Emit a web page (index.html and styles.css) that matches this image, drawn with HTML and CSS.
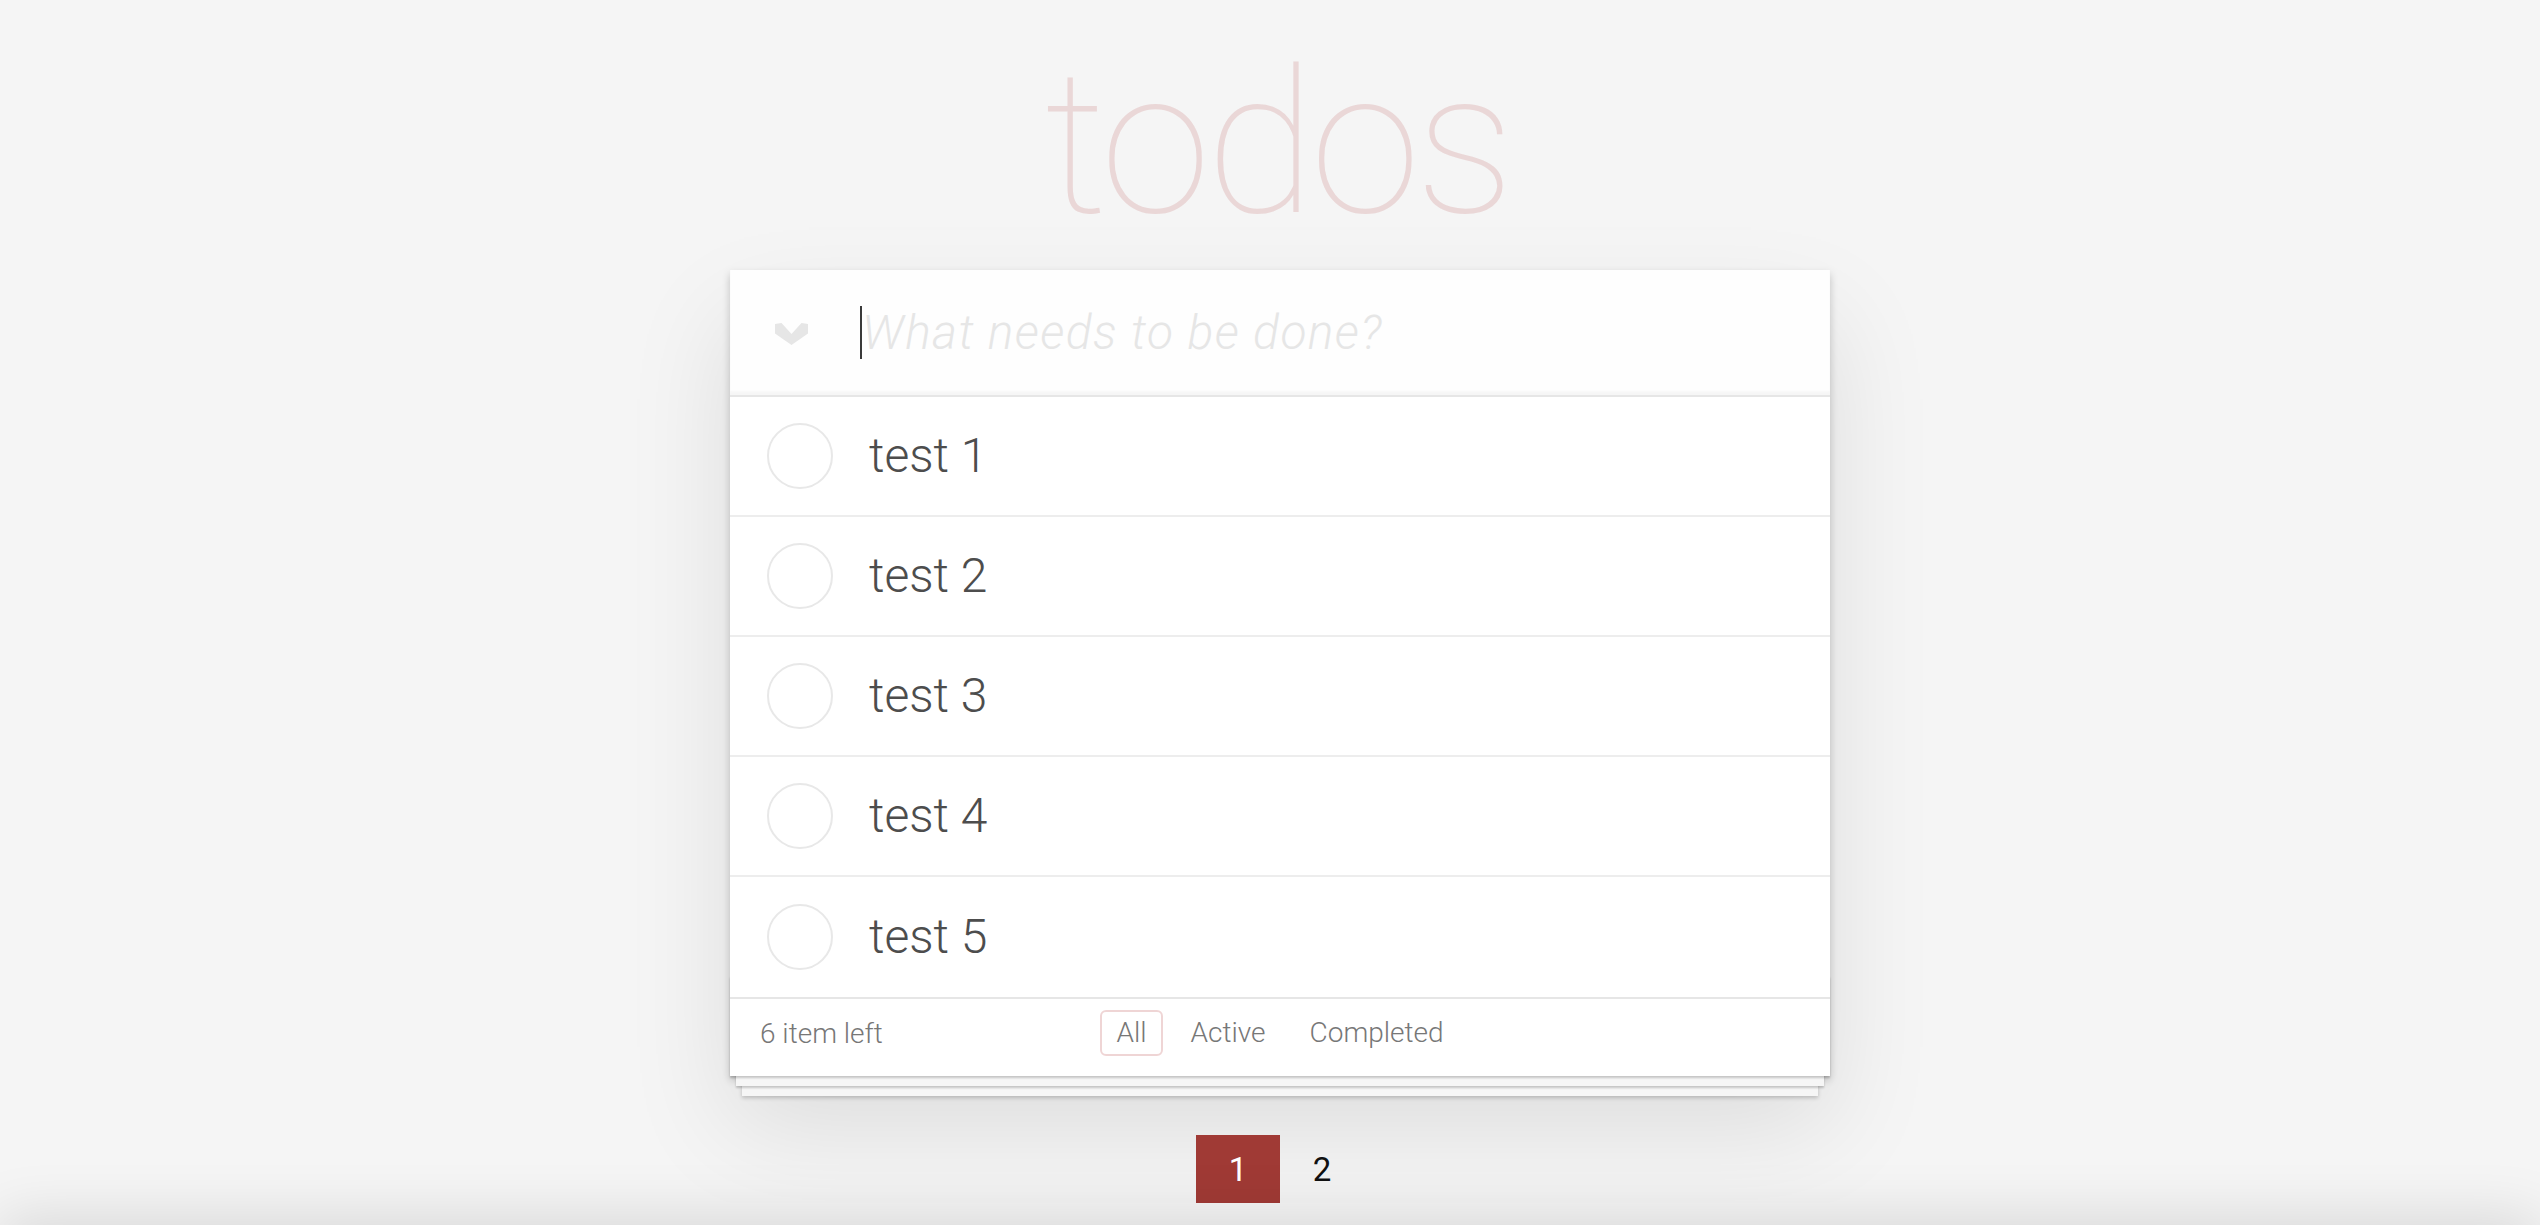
FILE: index.html
```html
<!DOCTYPE html>
<html lang="en">
<head>
<meta charset="utf-8">
<title>todos</title>
<link rel="stylesheet" href="styles.css">
</head>
<body>
<div class="page">
  <section class="todoapp">
    <h1 class="title">todos</h1>
    <div class="card">
      <header class="header">
        <svg class="toggle-all" width="33" height="22" viewBox="0 0 33 22" aria-hidden="true">
          <polygon points="0,1 6.5,0 16.5,11 26.5,0 33,1 33,10.5 16.5,22 0,10.5" fill="#e6e6e6"/>
        </svg>
        <div class="new-todo"><span class="caret"></span><span class="placeholder">What needs to be done?</span></div>
      </header>
      <ul class="todo-list">
        <li class="todo"><span class="check"></span><span class="label">test 1</span></li>
        <li class="todo"><span class="check"></span><span class="label">test 2</span></li>
        <li class="todo"><span class="check"></span><span class="label">test 3</span></li>
        <li class="todo"><span class="check"></span><span class="label">test 4</span></li>
        <li class="todo"><span class="check"></span><span class="label">test 5</span></li>
      </ul>
      <footer class="footer">
        <span class="count">6 item left</span>
        <ul class="filters">
          <li><a class="filter selected">All</a></li>
          <li><a class="filter">Active</a></li>
          <li><a class="filter">Completed</a></li>
        </ul>
        <span class="spacer"></span>
      </footer>
    </div>
  </section>
  <nav class="pager">
    <span class="page-num current">1</span>
    <span class="page-num">2</span>
  </nav>
</div>
<div class="bottom-shade"></div>
</body>
</html>
```
FILE: styles.css
```css
html {
  overflow: hidden;
}

body {
  margin: 0;
  padding: 0 0 0 20px;
  background: #f5f5f5;
  color: #4d4d4d;
  font-family: Roboto, "Liberation Sans", sans-serif;
  font-weight: 300;
  font-size: 28px;
  overflow: hidden;
}

.page {
  width: 1100px;
  margin: 0 auto;
}

.title {
  margin: 0 0 0 -6px;
  padding-top: 44px;
  height: 200px;
  font-size: 200px;
  line-height: 200px;
  font-weight: 100;
  text-align: center;
  color: rgba(175, 47, 47, 0.15);
  letter-spacing: -5px;
}

.card {
  margin-top: 26px;
  background: #fff;
  box-shadow: 0 4px 8px 0 rgba(0, 0, 0, 0.2), 0 50px 100px 0 rgba(0, 0, 0, 0.1);
}

.header {
  height: 125px;
  display: flex;
  align-items: center;
  padding-left: 45px;
  box-shadow: inset 0 -4px 2px rgba(0, 0, 0, 0.03);
  background: rgba(0, 0, 0, 0.003);
}

.toggle-all {
  display: block;
  width: 33px;
  height: 22px;
  flex: none;
  margin-top: 2px;
}

.new-todo {
  margin-left: 52px;
  display: flex;
  align-items: center;
  height: 53px;
}

.caret {
  width: 2px;
  height: 53px;
  background: #3a3a3a;
}

.placeholder {
  font-size: 48px;
  font-style: italic;
  font-weight: 300;
  color: #e6e6e6;
  line-height: 1;
  letter-spacing: 1.4px;
}

.todo-list {
  list-style: none;
  margin: 0;
  padding: 0;
  border-top: 2px solid #e6e6e6;
}

.todo {
  height: 118px;
  display: flex;
  align-items: center;
  border-bottom: 2px solid #ededed;
}

.todo:last-child {
  border-bottom: none;
  height: 120px;
}

.check {
  width: 62px;
  height: 62px;
  margin-left: 37px;
  border: 2px solid #e8e8e8;
  border-radius: 50%;
  flex: none;
}

.label {
  margin-left: 36px;
  font-size: 48px;
  line-height: 57.6px;
  font-weight: 300;
  color: #4d4d4d;
}

.footer {
  position: relative;
  box-sizing: border-box;
  height: 79px;
  border-top: 2px solid #e6e6e6;
  display: grid;
  grid-template-columns: 1fr auto 1fr;
  align-items: center;
  padding: 0 30px 9px;
  color: #777;
  font-size: 28px;
}

.footer::before {
  content: "";
  position: absolute;
  left: 0;
  right: 0;
  bottom: 0;
  height: 100px;
  overflow: hidden;
  box-shadow: 0 2px 2px rgba(0, 0, 0, 0.2),
    0 16px 0 -6px #f6f6f6,
    0 18px 2px -6px rgba(0, 0, 0, 0.2),
    0 32px 0 -12px #f6f6f6,
    0 34px 4px -12px rgba(0, 0, 0, 0.2);
  pointer-events: none;
}

.count {
  justify-self: start;
}

.filters {
  list-style: none;
  margin: 0;
  padding: 0;
  display: flex;
}

.filter {
  display: block;
  margin: 0 6px;
  padding: 5px 14px;
  line-height: 32px;
  border: 2px solid transparent;
  border-radius: 6px;
  color: #777;
  text-decoration: none;
}

.filter.selected {
  border-color: rgba(175, 47, 47, 0.2);
}

.pager {
  margin-top: 59px;
  display: flex;
  justify-content: center;
}

.page-num {
  width: 84px;
  height: 68px;
  display: flex;
  align-items: center;
  justify-content: center;
  font-size: 33px;
  font-weight: 400;
  color: #111;
}

.page-num.current {
  background: #a03a35;
  color: #fff;
}

.bottom-shade {
  position: fixed;
  left: 0;
  right: 0;
  bottom: -60px;
  height: 60px;
  box-shadow: 0 -6px 60px 0 rgba(0, 0, 0, 0.13);
  background: #ddd;
}
```
